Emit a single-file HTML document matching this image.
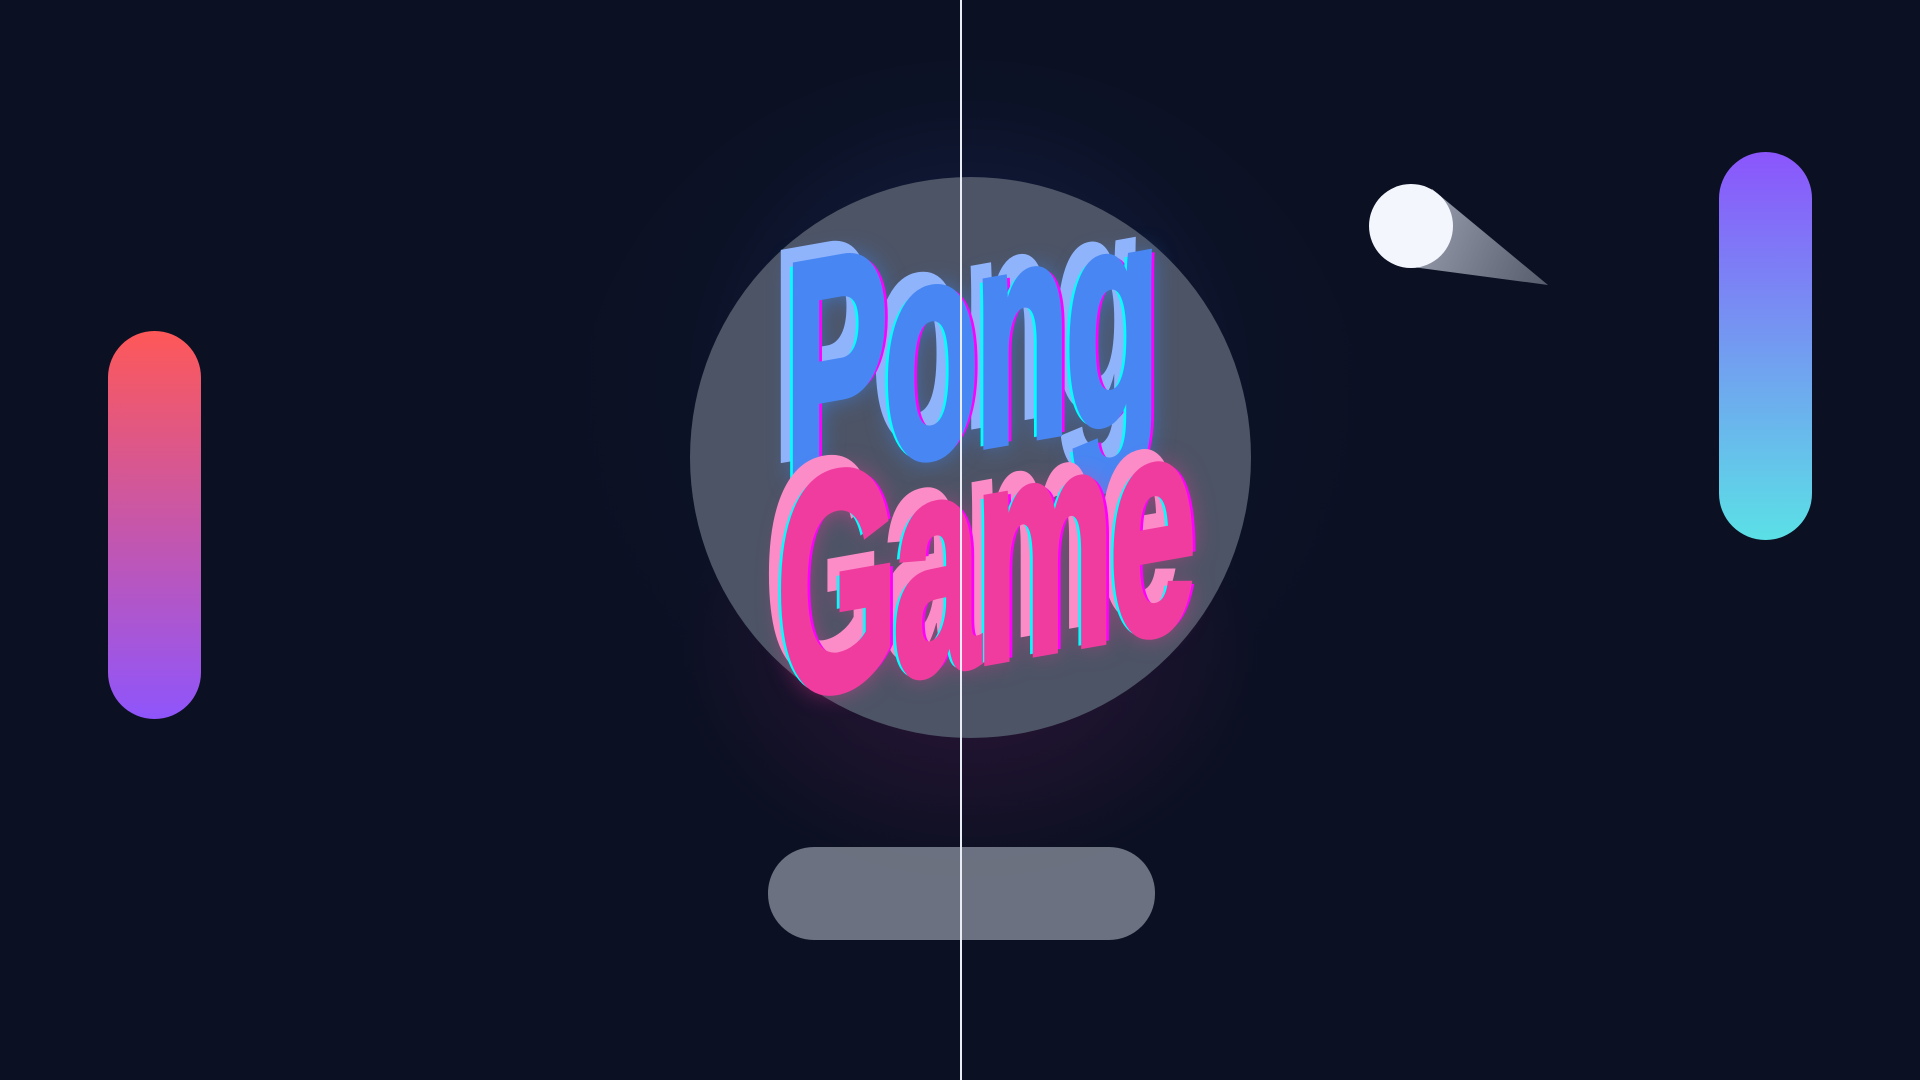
<!DOCTYPE html>
<html><head><meta charset="utf-8"><style>
html,body{margin:0;padding:0;width:1920px;height:1080px;overflow:hidden;background:#0b1022;}
.a{position:absolute}
.glow{left:570px;top:60px;width:800px;height:800px;border-radius:50%;background:radial-gradient(circle at 50% 40%,rgba(40,80,180,.3),rgba(20,30,70,.12) 45%,rgba(11,16,34,0) 70%);}
.glow2{left:650px;top:400px;width:640px;height:500px;border-radius:50%;background:radial-gradient(ellipse at 50% 50%,rgba(200,40,140,.18),rgba(11,16,34,0) 65%);}
.circle{left:690px;top:177px;width:561px;height:561px;border-radius:50%;background:#4d5466;}
.line{left:960px;top:0;width:2px;height:1080px;background:#e8ecf4;}
.pl{left:108px;top:331px;width:93px;height:388px;border-radius:47px;background:linear-gradient(#fe5858,#8f55fb);}
.pr{left:1719px;top:152px;width:93px;height:388px;border-radius:47px;background:linear-gradient(#8b55fc,#5be0e6);}
.bar{left:768px;top:847px;width:387px;height:93px;border-radius:46px;background:rgba(140,145,160,.75);}
.t{font-family:"Liberation Sans",sans-serif;font-weight:bold;font-size:200px;line-height:1;letter-spacing:-6px;white-space:nowrap;transform:translate(-50%,-50%) skewY(-10deg) scaleX(.78) scaleY(1.55);}
.pong{left:970px;top:343px;color:#4887f3;-webkit-text-stroke:5px #4887f3;text-shadow:-6px 0 #00ffff,6px 0 #ff00ff,-18px -12px #90b4fb,0 0 22px rgba(60,140,255,.7);}
.game{left:984px;top:557px;color:#f03c9f;-webkit-text-stroke:5px #f03c9f;text-shadow:-6px 0 #00ffff,6px 0 #ff00ff,-18px -12px #fb8cc8,0 0 22px rgba(255,60,160,.55);}
</style></head><body>
<div class="a glow"></div>
<div class="a glow2"></div>
<div class="a circle"></div>
<div class="a t pong">Pong</div>
<div class="a t game">Game</div>
<svg class="a" style="left:0;top:0" width="1920" height="1080">
<defs><linearGradient id="tr" x1="1411" y1="225" x2="1548" y2="285" gradientUnits="userSpaceOnUse"><stop offset="0" stop-color="#9ba0b0"/><stop offset="1" stop-color="#6a7080" stop-opacity=".8"/></linearGradient></defs>
<polygon points="1432,189 1548,285 1405,266" fill="url(#tr)"/>
<circle cx="1411" cy="226" r="42" fill="#f3f6fd"/>
</svg>
<div class="a bar"></div>
<div class="a line"></div>
<div class="a pl"></div>
<div class="a pr"></div>
</body></html>
